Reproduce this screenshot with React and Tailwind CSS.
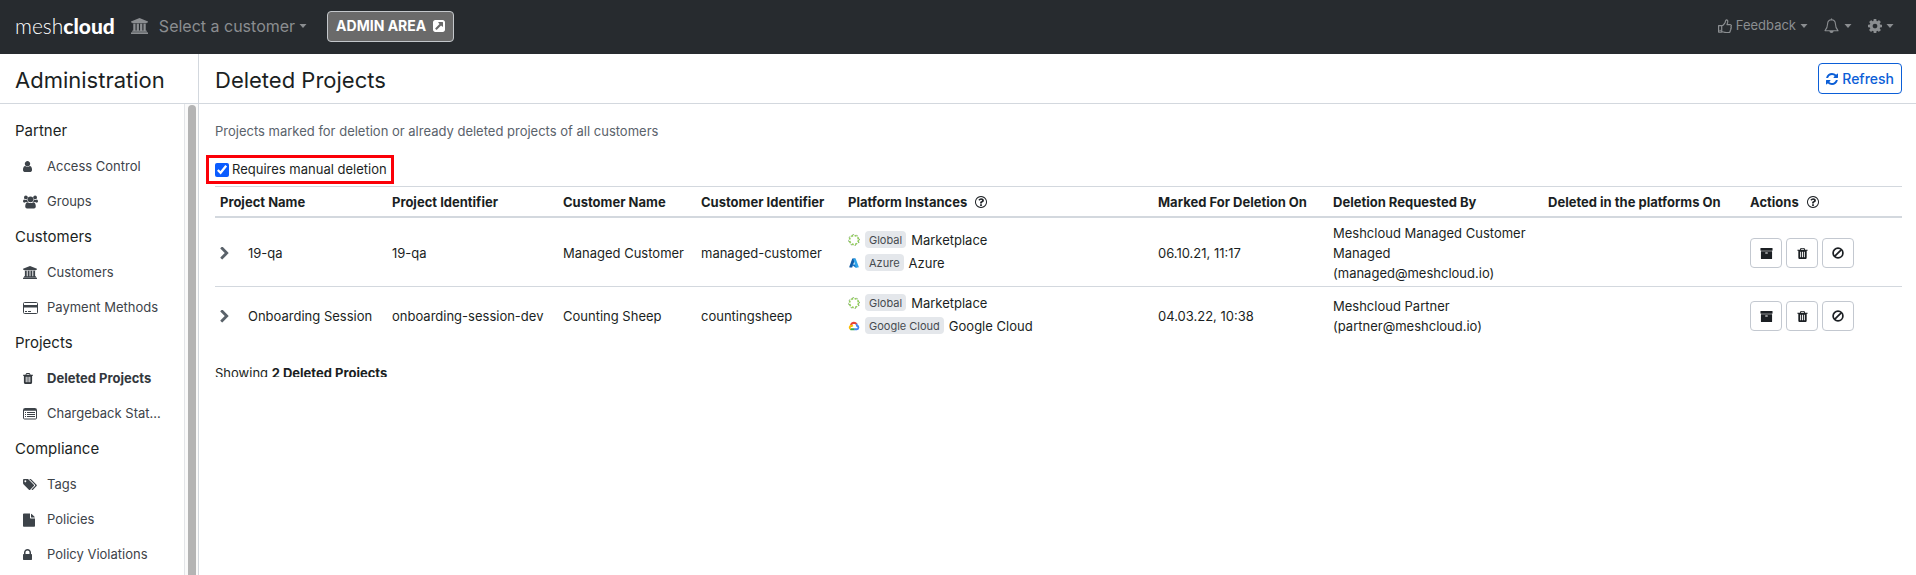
import React from "react";

const PATHS = {
  refresh:
    "M1639 1056q0 5-1 7-64 268-268 434.5t-478 166.5q-146 0-282.5-55t-243.5-157l-129 129q-19 19-45 19t-45-19-19-45v-448q0-26 19-45t45-19h448q26 0 45 19t19 45-19 45l-137 137q71 66 161 102t187 36q134 0 250-65t186-179q11-17 53-117 8-23 30-23h192q13 0 22.5 9.5t9.5 22.5zm25-800v448q0 26-19 45t-45 19h-448q-26 0-45-19t-19-45 19-45l138-138q-148-137-349-137-134 0-250 65t-186 179q-11 17-53 117-8 23-30 23h-199q-13 0-22.5-9.5t-9.5-22.5v-7q65-268 270-434.5t480-166.5q146 0 284 55.5t245 156.5l130-129q19-19 45-19t45 19 19 45z",
  external:
    "M1408 928v-480q0-26-19-45t-45-19h-480q-42 0-59 39-17 41 14 70l144 144-534 534q-19 19-19 45t19 45l102 102q19 19 45 19t45-19l534-534 144 144q18 19 45 19 12 0 25-5 39-17 39-59zm256-512v960q0 119-84.5 203.5t-203.5 84.5h-960q-119 0-203.5-84.5t-84.5-203.5v-960q0-119 84.5-203.5t203.5-84.5h960q119 0 203.5 84.5t84.5 203.5z",
  chevron:
    "M1363 877l-742 742q-19 19-45 19t-45-19l-166-166q-19-19-19-45t19-45l531-531-531-531q-19-19-19-45t19-45l166-166q19-19 45-19t45 19l742 742q19 19 19 45t-19 45z",
  question:
    "M1008 1200v160q0 14-9 23t-23 9h-160q-14 0-23-9t-9-23v-160q0-14 9-23t23-9h160q14 0 23 9t9 23zm256-496q0 50-15 90t-45.5 69-52 44-59.5 36q-32 18-46.5 28t-26 24-11.5 29v32q0 14-9 23t-23 9h-160q-14 0-23-9t-9-23v-68q0-35 10.5-64.5t24-47.5 39-35.5 41-25.5 44.5-21q53-25 75-43t22-49q0-42-43.5-71.5t-95.5-29.5q-56 0-95 27-29 20-80 83-9 12-25 12-11 0-19-6l-108-82q-10-7-12-20t5-23q122-192 349-192 129 0 238.5 89.5t109.5 214.5zm-368-448q-130 0-248.5 51t-204 136.5-136.5 204-51 248.5 51 248.5 136.5 204 204 136.5 248.5 51 248.5-51 204-136.5 136.5-204 51-248.5-51-248.5-136.5-204-204-136.5-248.5-51zm768 640q0 209-103 385.5t-279.5 279.5-385.5 103-385.5-103-279.5-279.5-103-385.5 103-385.5 279.5-279.5 385.5-103 385.5 103 279.5 279.5 103 385.5z",
  archive:
    "M1088 832q0-26-19-45t-45-19h-256q-26 0-45 19t-19 45 19 45 45 19h256q26 0 45-19t19-45zm576-192v960q0 26-19 45t-45 19h-1408q-26 0-45-19t-19-45v-960q0-26 19-45t45-19h1408q26 0 45 19t19 45zm64-448v256q0 26-19 45t-45 19h-1536q-26 0-45-19t-19-45v-256q0-26 19-45t45-19h1536q26 0 45 19t19 45z",
  trash:
    "M704 1376v-704q0-14-9-23t-23-9h-64q-14 0-23 9t-9 23v704q0 14 9 23t23 9h64q14 0 23-9t9-23zm256 0v-704q0-14-9-23t-23-9h-64q-14 0-23 9t-9 23v704q0 14 9 23t23 9h64q14 0 23-9t9-23zm256 0v-704q0-14-9-23t-23-9h-64q-14 0-23 9t-9 23v704q0 14 9 23t23 9h64q14 0 23-9t9-23zm-544-992h448l-48-117q-7-9-17-11h-317q-10 2-17 11zm928 32v64q0 14-9 23t-23 9h-96v948q0 83-47 143.5t-113 60.5h-832q-66 0-113-58.5t-47-141.5v-952h-96q-14 0-23-9t-9-23v-64q0-14 9-23t23-9h309l70-167q15-37 54-63t79-26h320q40 0 79 26t54 63l70 167h309q14 0 23 9t9 23z",
  lock:
    "M640 768h512v-192q0-106-75-181t-181-75-181 75-75 181v192zm832 96v576q0 40-28 68t-68 28h-960q-40 0-68-28t-28-68v-576q0-40 28-68t68-28h32v-192q0-184 132-316t316-132 316 132 132 316v192h32q40 0 68 28t28 68z",
  user:
    "M1536 1399q0 109-62.5 187t-150.5 78h-854q-88 0-150.5-78t-62.5-187q0-85 8.5-160.5t31.5-152 58.5-131 94-89 134.5-34.5q131 128 313 128t313-128q76 0 134.5 34.5t94 89 58.5 131 31.5 152 8.5 160.5zm-256-887q0 159-112.5 271.5t-271.5 112.5-271.5-112.5-112.5-271.5 112.5-271.5 271.5-112.5 271.5 112.5 112.5 271.5z",
  tags:
    "M448 448q0-53-37.5-90.5t-90.5-37.5-90.5 37.5-37.5 90.5 37.5 90.5 90.5 37.5 90.5-37.5 37.5-90.5zm1067 576q0 53-37 90l-491 492q-39 37-91 37-53 0-90-37l-715-716q-38-37-64.5-101t-26.5-117v-416q0-52 38-90t90-38h416q53 0 117 26.5t102 64.5l715 714q37 39 37 91zm384 0q0 53-37 90l-491 492q-39 37-91 37-36 0-59-14t-53-45l470-470q37-37 37-90 0-52-37-91l-715-714q-38-38-102-64.5t-117-26.5h224q53 0 117 26.5t102 64.5l715 714q37 39 37 91z",
  bank:
    "M960 0l960 384v128h-128q0 26-20.5 45t-48.5 19h-1526q-28 0-48.5-19t-20.5-45h-128v-128zm-704 640h256v768h128v-768h256v768h128v-768h256v768h128v-768h256v768h59q28 0 48.5 19t20.5 45v64h-1664v-64q0-26 20.5-45t48.5-19h59v-768zm1595 960q28 0 48.5 19t20.5 45v128h-1920v-128q0-26 20.5-45t48.5-19h1782z",
  cog:
    "M1152 896q0-106-75-181t-181-75-181 75-75 181 75 181 181 75 181-75 75-181zm512-109v222q0 12-8 23t-20 13l-185 28q-19 54-39 91 35 50 107 138 10 12 10 25t-9 23q-27 37-99 108t-94 71q-12 0-26-9l-138-108q-44 23-91 38-16 136-29 186-7 28-36 28h-222q-14 0-24.5-8.5t-11.5-21.5l-28-184q-49-16-90-37l-141 107q-10 9-25 9-14 0-25-11-126-114-165-168-7-10-7-23 0-12 8-23 15-21 51-66.500t54-70.500q-27-50-41-99l-183-27q-13-2-21-12.500t-8-23.500v-222q0-12 8-23t19-13l186-28q14-46 39-92-40-57-107-138-10-12-10-24 0-10 9-23 26-36 98.500-107.500t94.500-71.500q13 0 26 10l138 107q44-23 91-38 16-136 29-186 7-28 36-28h222q14 0 24.500 8.500t11.500 21.500l28 184q49 16 90 37l142-107q9-9 24-9 13 0 25 10 129 119 165 170 7 8 7 22 0 12-8 23-15 21-51 66.500t-54 70.500q26 50 41 98l183 28q13 2 21 12.500t8 23.500z",
};

function Glyph({ name, box = "0 0 1792 1792", className }) {
  return (
    <svg viewBox={box} className={className} fill="currentColor" aria-hidden="true">
      <path d={PATHS[name]} />
    </svg>
  );
}

function Ban({ className }) {
  return (
    <svg viewBox="0 0 12 12" className={className} fill="none" stroke="currentColor" strokeWidth="1.7" aria-hidden="true">
      <circle cx="6" cy="6" r="4.9" />
      <path d="M2.6 9.4 9.4 2.6" />
    </svg>
  );
}

function Users() {
  return (
    <svg viewBox="0 0 15 14" className="h-3.5 w-[15px]" fill="currentColor" aria-hidden="true">
      <circle cx="2.9" cy="2.4" r="1.9" />
      <circle cx="12.1" cy="2.4" r="1.9" />
      <circle cx="7.5" cy="4.3" r="2.9" />
      <path d="M1.2 4.4Q2.9 5.6 4.2 4.6 4.1 6 5 7H3.2Q2 7.1 1.5 7.7 0 7.6 0 6.5 0 4.5 1.2 4.4zM13.8 4.4Q12.1 5.6 10.8 4.6 10.9 6 10 7h1.8q1.2.1 1.7.7Q15 7.6 15 6.5 15 4.5 13.8 4.4z" />
      <path d="M4.7 7.2Q7.5 9 10.3 7.2 12.7 7.3 12.8 11.6 12.7 13.4 11 13.5H4Q2.3 13.4 2.2 11.6 2.3 7.3 4.7 7.2z" />
    </svg>
  );
}

function Card() {
  return (
    <svg viewBox="0 0 15 12" className="h-3 w-[15px]" aria-hidden="true">
      <rect x=".5" y=".5" width="14" height="11" rx="1" fill="none" stroke="currentColor" />
      <path d="M1 3h13v2.5H1zM2 9h2v1H2zM5 9h3v1H5z" fill="currentColor" />
    </svg>
  );
}

function ListAlt() {
  return (
    <svg viewBox="0 0 14 12" className="h-3 w-3.5" aria-hidden="true">
      <rect x=".5" y=".5" width="13" height="10.5" rx="1" fill="none" stroke="currentColor" />
      <path d="M1 1h12v1.8H1zM2 4h1v1H2zM2 6h1v1H2zM2 8h1v1H2zM4 4h8v1H4zM4 6h8v1H4zM4 8h8v1H4z" fill="currentColor" />
    </svg>
  );
}

function FileIcon() {
  return (
    <svg viewBox="0 0 12 14" className="h-3.5 w-3" fill="currentColor" aria-hidden="true">
      <path d="M1 .5h6v4.3q0 .7.7.7H12V13q0 .8-.8.8H.8Q0 13.8 0 13V1.3Q0 .5 1 .5zM8 .7q.5.1.9.5l2.4 2.4q.4.4.5.9H8z" />
    </svg>
  );
}

function ThumbsUp() {
  return (
    <svg viewBox="0 0 14 15" className="h-[15px] w-3.5" aria-hidden="true">
      <path
        d="M.6 6.6h3.1v6.5H.6zM3.7 6.9C5.3 6.4 6.1 4.9 6.9 3.9 7.5 3.1 7.2 1 8.3.8 9.7.8 9.9 2 9.7 3.2L9 5.6h3.2c1.3.1 1.5 1.5.7 2.2.6.7.4 1.5-.2 2 .3.8 0 1.4-.5 1.8.1 1.2-.4 1.9-1.6 1.9H8.2c-1.7 0-2.9-.6-4.5-.9"
        fill="none"
        stroke="currentColor"
        strokeWidth="1.2"
        strokeLinejoin="round"
      />
      <circle cx="2.1" cy="11.5" r=".7" fill="currentColor" />
    </svg>
  );
}

function Bell() {
  return (
    <svg viewBox="0 0 15 16" className="h-4 w-[15px]" aria-hidden="true">
      <path
        d="M7.5 1.8C4.9 1.9 3.7 3.9 3.6 5.8 3.5 9.5 2.6 11.1 1 12.7h13C12.4 11.1 11.5 9.5 11.4 5.8 11.3 3.9 10.1 1.9 7.5 1.8z"
        fill="none"
        stroke="currentColor"
        strokeWidth="1.1"
        strokeLinejoin="round"
      />
      <path d="M6.9.4h1.2v1.4H6.9zM5.4 13h4.2q-.1 2-2.1 2.1Q5.5 15 5.4 13z" fill="currentColor" />
    </svg>
  );
}

function Caret() {
  return (
    <svg viewBox="0 0 8 4" className="h-1 w-2" fill="currentColor" aria-hidden="true">
      <path d="M.5 0h7L4 4z" />
    </svg>
  );
}

function MarketplaceLogo() {
  return (
    <svg viewBox="0 0 12 12" className="size-3" fill="none" aria-hidden="true">
      <circle cx="6" cy="6" r="4.5" stroke="#93cf5c" strokeWidth="1.7" strokeDasharray="2.1 1.434" />
      <circle cx="6" cy="6" r="5.4" stroke="#4f7d3a" strokeWidth="1" strokeDasharray="1 3.241" strokeDashoffset="2" />
    </svg>
  );
}

function AzureLogo() {
  return (
    <svg viewBox="0 0 12 12" className="size-3" aria-hidden="true">
      <path d="M4.3 1.5h3L4.2 10.5H1.7q-.6-.1-.4-.8z" fill="#0f5ba7" />
      <path d="M3.5 7.4h4.3l1.2 3-1.6.1z" fill="#1173c8" />
      <path d="M5.2 1.5h2.4l3.1 8.3q.1.6-.5.7H7.8z" fill="#2fa4ea" />
    </svg>
  );
}

function GoogleCloudLogo() {
  return (
    <svg viewBox="0 0 12 12" className="size-3" fill="none" strokeWidth="1.9" aria-hidden="true">
      <path d="M2.9 5.3Q3.7 2.9 6 2.8 7.7 2.8 8.6 4.3" stroke="#ea4335" />
      <path d="M8.3 4Q9 4.800 9 5.800 10.400 6 10.400 7.500 10.300 9.200 8.800 9.300H6.200" stroke="#4285f4" />
      <path d="M6.4 9.3H3.7Q2.900 9.300 2.400 8.900" stroke="#34a853" />
      <path d="M2.600 9Q1.600 8.300 1.700 7.200 1.900 5.800 3.400 5.700 4.200 5.800 4.700 6.500" stroke="#fbbc05" />
    </svg>
  );
}

const NAV = [
  {
    title: "Partner",
    items: [
      { label: "Access Control", icon: <Glyph name="user" box="256 0 1280 1792" className="h-[13px] w-[9px]" /> },
      { label: "Groups", icon: <Users /> },
    ],
  },
  {
    title: "Customers",
    items: [
      { label: "Customers", icon: <Glyph name="bank" box="0 0 1920 1792" className="h-[13px] w-3.5" /> },
      { label: "Payment Methods", icon: <Card /> },
    ],
  },
  {
    title: "Projects",
    items: [
      { label: "Deleted Projects", active: true, icon: <Glyph name="trash" box="192 0 1408 1792" className="h-[13px] w-2.5" /> },
      { label: "Chargeback Stat...", icon: <ListAlt /> },
    ],
  },
  {
    title: "Compliance",
    items: [
      { label: "Tags", icon: <Glyph name="tags" box="0 0 1920 1792" className="h-[13px] w-3.5" /> },
      { label: "Policies", icon: <FileIcon /> },
      { label: "Policy Violations", icon: <Glyph name="lock" box="320 0 1152 1792" className="h-3.5 w-[9px]" /> },
    ],
  },
];

const COLUMNS = [
  { label: "Project Name", width: "w-[172px]" },
  { label: "Project Identifier", width: "w-[171px]" },
  { label: "Customer Name", width: "w-[138px]" },
  { label: "Customer Identifier", width: "w-[147px]" },
  { label: "Platform Instances", width: "w-[310px]", help: true },
  { label: "Marked For Deletion On", width: "w-[175px]" },
  { label: "Deletion Requested By", width: "w-[215px]" },
  { label: "Deleted in the platforms On", width: "w-[202px]" },
  { label: "Actions", width: "w-[157px]", help: true },
];

const ROWS = [
  {
    name: "19-qa",
    id: "19-qa",
    customer: "Managed Customer",
    customerId: "managed-customer",
    platforms: [
      { logo: <MarketplaceLogo />, location: "Global", name: "Marketplace" },
      { logo: <AzureLogo />, location: "Azure", name: "Azure" },
    ],
    marked: "06.10.21, 11:17",
    by: ["Meshcloud Managed Customer", "Managed", "(managed@meshcloud.io)"],
  },
  {
    name: "Onboarding Session",
    id: "onboarding-session-dev",
    customer: "Counting Sheep",
    customerId: "countingsheep",
    platforms: [
      { logo: <MarketplaceLogo />, location: "Global", name: "Marketplace" },
      { logo: <GoogleCloudLogo />, location: "Google Cloud", name: "Google Cloud" },
    ],
    marked: "04.03.22, 10:38",
    by: ["Meshcloud Partner", "(partner@meshcloud.io)"],
  },
];

function TopBar() {
  return (
    <header className="flex h-[54px] shrink-0 items-center bg-[#272b2f] pr-[22px] pb-0.5 pl-[15px] text-[#8b8e91]">
      <a href="#home" className="font-['Lato',sans-serif] text-[21px] leading-6 font-light text-white">
        mesh<span className="font-black">cloud</span>
      </a>
      <button type="button" className="ml-4 flex items-center text-base">
        <Glyph name="bank" box="0 0 1920 1792" className="mr-[11px] h-4 w-[17px]" />
        Select a customer
        <span className="ml-1">
          <Caret />
        </span>
      </button>
      <a
        href="#admin"
        className="ml-5 flex h-[31px] items-center gap-[7px] rounded border border-[#c3c7cb] bg-[#6a6a6a] px-2 text-sm font-bold text-white"
      >
        ADMIN AREA
        <Glyph name="external" box="128 128 1536 1536" className="size-3" />
      </a>
      <div className="ml-auto flex items-center gap-4 text-[13px]">
        <button type="button" className="flex items-center gap-1">
          <ThumbsUp />
          Feedback
          <Caret />
        </button>
        <button type="button" aria-label="Notifications" className="flex items-center gap-[5px]">
          <Bell />
          <Caret />
        </button>
        <button type="button" aria-label="Settings" className="flex items-center gap-1">
          <Glyph name="cog" box="128 128 1536 1536" className="size-3.5" />
          <Caret />
        </button>
      </div>
    </header>
  );
}

function Sidebar() {
  return (
    <aside className="flex w-[199px] shrink-0 flex-col border-r border-[#d3d8de]">
      <h2 className="flex h-[50px] shrink-0 items-center border-b border-[#d3d8de] pt-1 pl-[15px] text-[22px]">Administration</h2>
      <div className="flex min-h-0 flex-1">
        <nav className="min-w-0 flex-1 overflow-hidden border-r border-[#e3e5e8] pt-[9px]">
          {NAV.map((group) => (
            <section key={group.title}>
              <h3 className="flex h-9 items-center pl-[15px] text-[15px]">{group.title}</h3>
              <ul>
                {group.items.map((item) => (
                  <li key={item.label}>
                    <a
                      href="#nav"
                      className={
                        item.active
                          ? "flex h-[35px] items-center pl-[23px] text-[13px] font-bold text-[#33383d]"
                          : "flex h-[35px] items-center pl-[23px] text-[13px] text-[#3d4349]"
                      }
                    >
                      <span className="flex w-6 shrink-0">{item.icon}</span>
                      {item.label}
                    </a>
                  </li>
                ))}
              </ul>
            </section>
          ))}
        </nav>
        <div className="flex w-[13px] shrink-0 justify-center bg-[#fafafa] pt-px">
          <div className="h-full w-2 rounded-t-full bg-[#b4b4b4]" />
        </div>
      </div>
    </aside>
  );
}

function ActionButton({ label, children }) {
  return (
    <button
      type="button"
      aria-label={label}
      className="flex h-[30px] w-8 items-center justify-center rounded border border-[#c3c8d0]"
    >
      {children}
    </button>
  );
}

function ProjectsTable() {
  return (
    <table className="w-full table-fixed border-separate border-spacing-0 text-left text-[13px] leading-5">
      <thead>
        <tr>
          {COLUMNS.map((c) => (
            <th
              key={c.label}
              scope="col"
              className={`${c.width} h-8 border-t border-b-2 border-t-[#d3d8de] border-b-[#d3d8de] px-[5px] py-0 font-bold whitespace-nowrap`}
            >
              <span className="flex items-center gap-2">
                {c.label}
                {c.help && <Glyph name="question" box="128 128 1536 1536" className="size-3" />}
              </span>
            </th>
          ))}
        </tr>
      </thead>
      <tbody className="[&>tr:not(:last-child)>td]:border-b [&>tr>td]:border-[#d3d8de] [&>tr>td]:px-[5px] [&>tr>td]:pt-[5px] [&>tr>td]:pb-[3px]">
        {ROWS.map((r) => (
          <tr key={r.name} className="h-14">
            <td>
              <span className="flex items-center">
                <button type="button" aria-label="Expand row" className="w-7 text-[#5a626a]">
                  <Glyph name="chevron" box="320 80 1088 1632" className="h-[13px] w-[9px]" />
                </button>
                {r.name}
              </span>
            </td>
            <td>{r.id}</td>
            <td>{r.customer}</td>
            <td>{r.customerId}</td>
            <td>
              <div className="flex flex-col gap-1.5 pb-1">
                {r.platforms.map((p) => (
                  <div key={p.name} className="flex h-[17px] items-center">
                    {p.logo}
                    <span className="mr-[5px] ml-[5px] h-[17px] rounded bg-[#e4e7eb] px-1 text-[11px] leading-[18px] text-[#464b50]">
                      {p.location}
                    </span>
                    {p.name}
                  </div>
                ))}
              </div>
            </td>
            <td>{r.marked}</td>
            <td>
              {r.by.map((line) => (
                <div key={line}>{line}</div>
              ))}
            </td>
            <td />
            <td>
              <div className="flex gap-1">
                <ActionButton label="Archive">
                  <Glyph name="archive" className="size-[13px]" />
                </ActionButton>
                <ActionButton label="Delete">
                  <Glyph name="trash" className="size-[13px]" />
                </ActionButton>
                <ActionButton label="Reject">
                  <Ban className="size-3" />
                </ActionButton>
              </div>
            </td>
          </tr>
        ))}
      </tbody>
    </table>
  );
}

export default function App() {
  return (
    <div className="flex h-screen flex-col overflow-hidden bg-white font-['Inter',sans-serif] text-[#1b1f23]">
      <TopBar />
      <div className="flex min-h-0 flex-1">
        <Sidebar />
        <main className="flex min-w-0 flex-1 flex-col">
          <div className="flex h-[50px] shrink-0 items-center justify-between border-b border-[#d3d8de] pr-3.5 pl-4">
            <h1 className="pt-1 text-[22px]">Deleted Projects</h1>
            <button
              type="button"
              className="flex h-[31px] items-center gap-1 rounded border border-[#0b5ed7] px-[7px] text-sm font-medium text-[#0b5ed7]"
            >
              <Glyph name="refresh" box="128 128 1536 1536" className="size-3" />
              Refresh
            </button>
          </div>
          <div className="pt-[17px] pr-3.5 pl-4">
            <p className="text-[13px] leading-5 text-[#5a626b]">
              Projects marked for deletion or already deleted projects of all customers
            </p>
            <div className="mt-3.5 mb-0.5 -ml-[9px] flex h-[29px] w-fit items-center border-3 border-[#fb0007] pr-1 pl-1.5">
              <input
                id="manual"
                type="checkbox"
                defaultChecked
                className="mr-[3px] size-3.5 accent-[#0a5cff]"
              />
              <label htmlFor="manual" className="pb-0.5 text-[13px] leading-5">
                Requires manual deletion
              </label>
            </div>
            <ProjectsTable />
            <p className="mt-[21px] h-[13px] overflow-hidden text-[13px] leading-[18px]">
              Showing <b>2 Deleted Projects</b>
            </p>
          </div>
        </main>
      </div>
    </div>
  );
}
